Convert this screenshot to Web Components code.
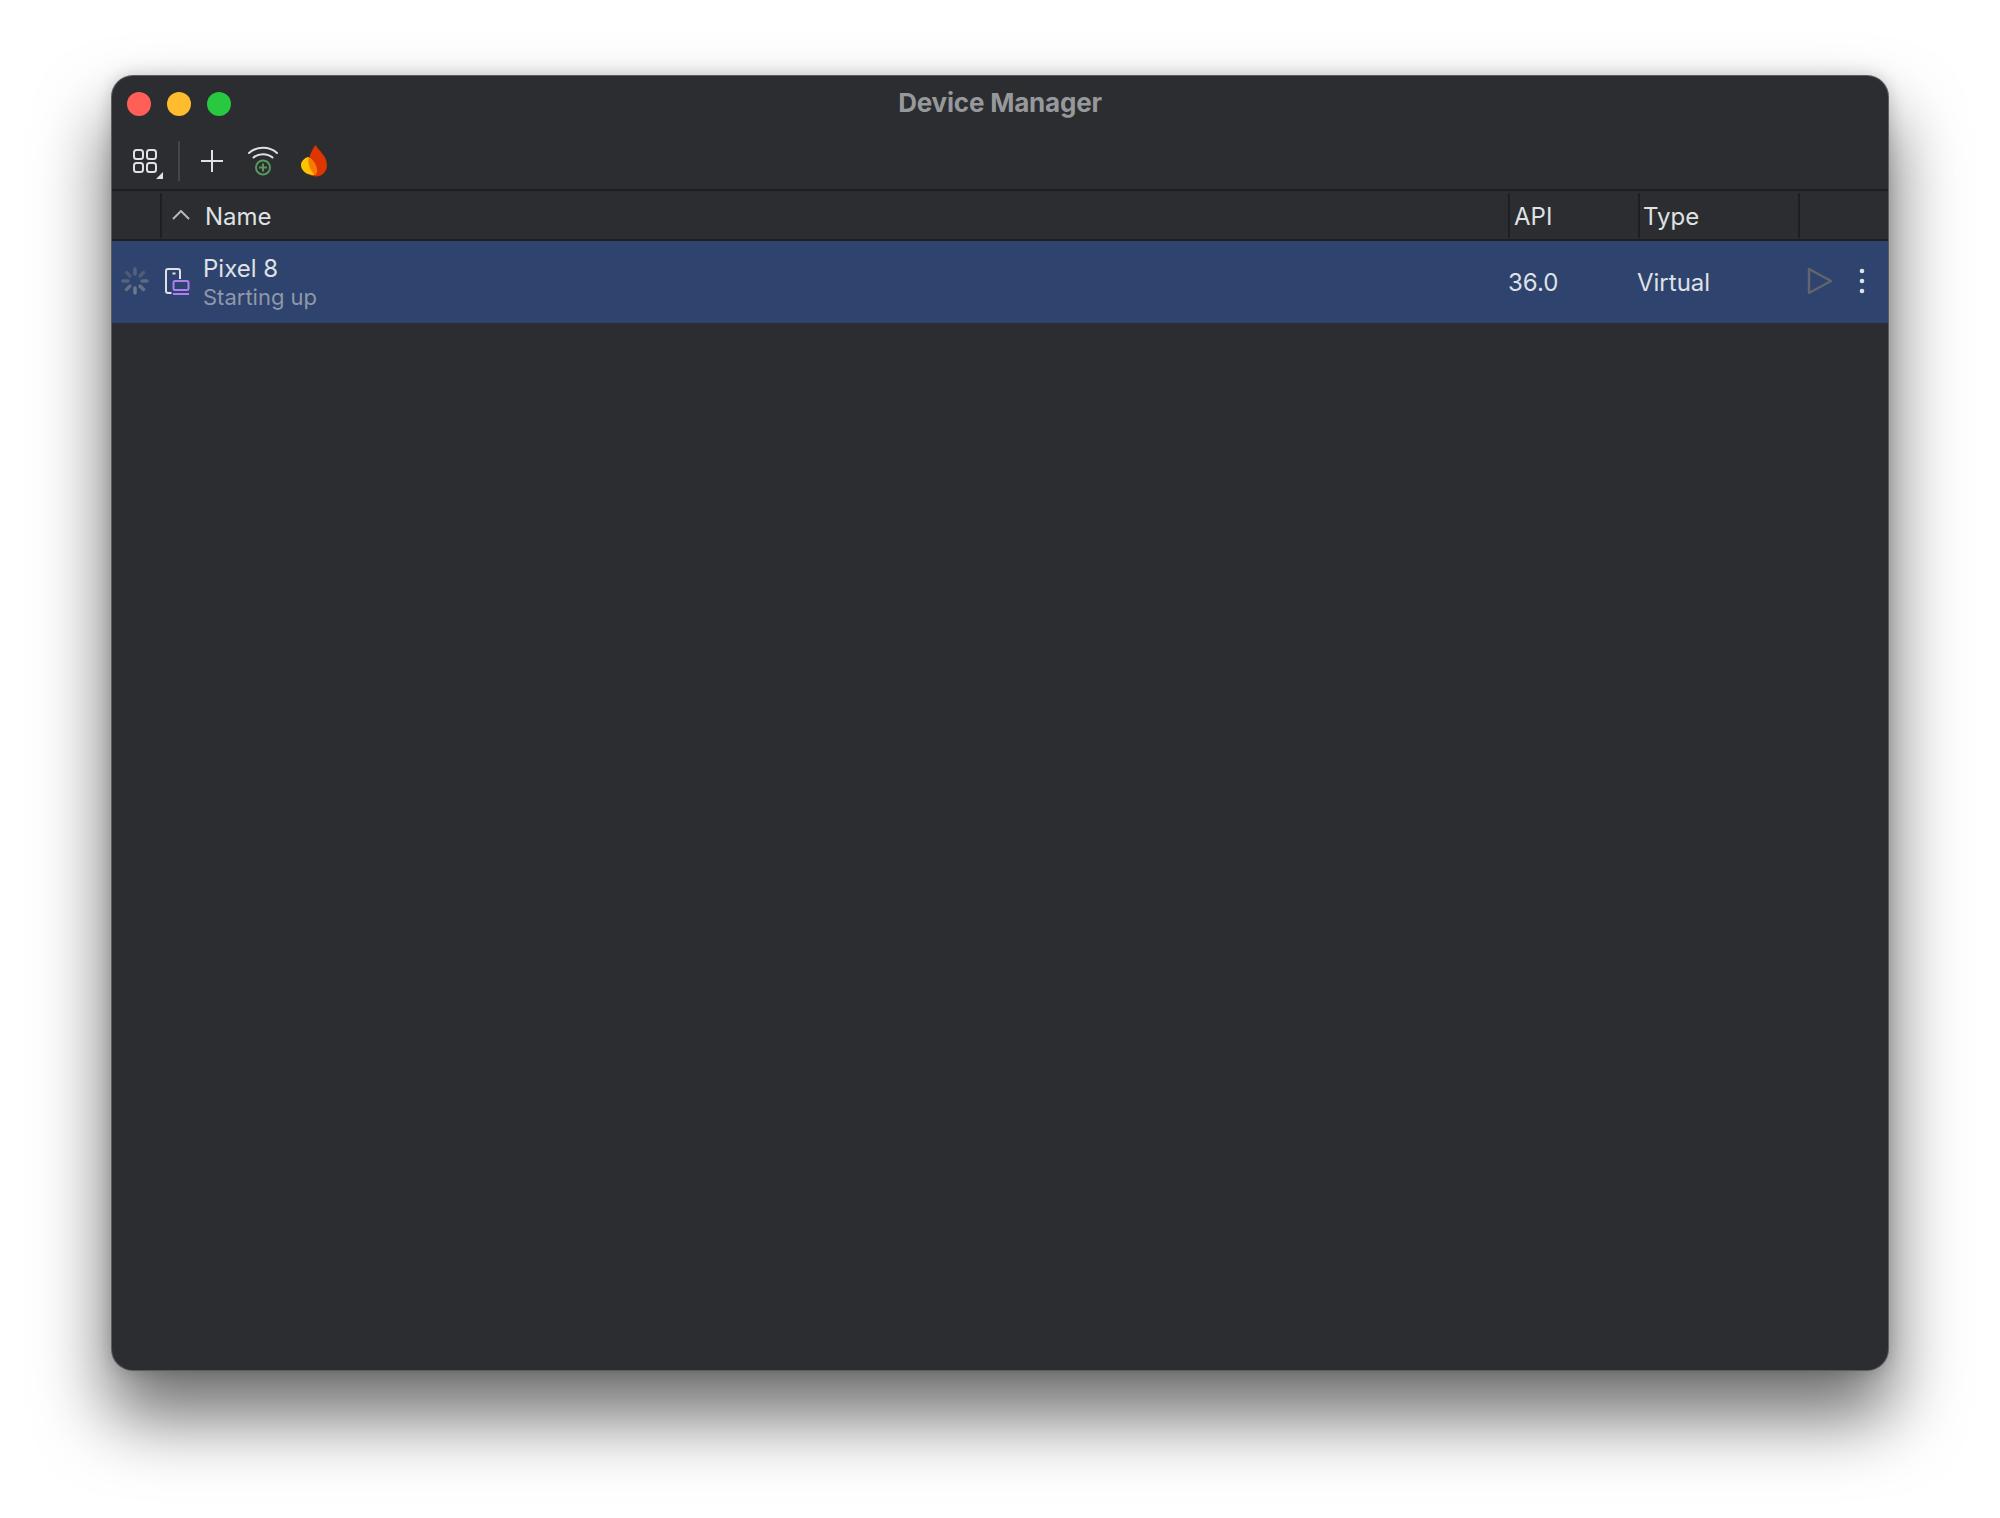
<!DOCTYPE html>
<html>
<head>
<meta charset="utf-8">
<title>Device Manager</title>
<style>
  html, body { margin: 0; height: 100%; background: #fff; }
  body { padding: 76px 112px 0; box-sizing: border-box; height: 1518px; overflow: hidden; font-family: Inter, "Liberation Sans", sans-serif; }
</style>
</head>
<body>
<device-window window-title="Device Manager">
  <window-toolbar></window-toolbar>
  <device-table></device-table>
</device-window>

<script>
class DeviceWindow extends HTMLElement {
  connectedCallback() {
    this.attachShadow({ mode: 'open' });
    this.shadowRoot.innerHTML = `
      <style>
        :host {
          display: flex;
          flex-direction: column;
          width: 1776px;
          height: 1294px;
          box-sizing: border-box;
          background: #2b2d30;
          border-radius: 21px;
          box-shadow: 0 0 0 1px #5c5d60, 0 44px 70px 4px rgba(0,0,0,.56), 0 0 18px rgba(0,0,0,.2);
        }
        .title {
          display: flex;
          align-items: center;
          gap: 16px;
          height: 56px;
          padding: 0 15px;
          position: relative;
          flex: none;
        }
        .dot { width: 24px; height: 24px; border-radius: 50%; }
        .r { background: #ff5f57; }
        .y { background: #febc2e; }
        .g { background: #28c840; }
        .name {
          position: absolute;
          left: 0; right: 0; top: 11px;
          text-align: center;
          font: 700 26px/32px Inter, "Liberation Sans", sans-serif;
          letter-spacing: -0.2px;
          color: #97989b;
        }
      </style>
      <div class="title">
        <span class="dot r"></span><span class="dot y"></span><span class="dot g"></span>
        <span class="name">${this.getAttribute('window-title')}</span>
      </div>
      <slot></slot>
    `;
  }
}

class WindowToolbar extends HTMLElement {
  connectedCallback() {
    this.attachShadow({ mode: 'open' });
    this.shadowRoot.innerHTML = `
      <style>
        :host {
          display: flex;
          align-items: center;
          height: 59px;
          padding: 1px 0 0 21px;
          flex: none;
          box-sizing: border-box;
          border-bottom: 2px solid #1e1f22;
        }
        svg { display: block; flex: none; }
        .apps { margin-top: 6px; }
        .sep { width: 2px; height: 40px; background: #43454a; margin: 0 21px 0 14px; }
        .wifi { margin-left: 25px; }
        .fire { margin-left: 23px; }
      </style>
      <svg class="apps" width="31" height="31" viewBox="0 0 31 31" fill="none" stroke="#dfe1e5" stroke-width="2">
        <rect x="1" y="1" width="9" height="9" rx="2.500"/>
        <rect x="14" y="1" width="9" height="9" rx="2.500"/>
        <rect x="1" y="14" width="9" height="9" rx="2.500"/>
        <rect x="14" y="14" width="9" height="9" rx="2.500"/>
        <path d="M30 23v7h-7z" fill="#dfe1e5" stroke="none"/>
      </svg>
      <div class="sep"></div>
      <svg width="22" height="22" viewBox="0 0 22 22" fill="none" stroke="#dfe1e5" stroke-width="2">
        <path d="M11 0v22M0 11h22"/>
      </svg>
      <svg class="wifi" width="30" height="30" viewBox="0 0 30 30" fill="none">
        <path d="M1 7C8.500 0 21.500 0 29 7" stroke="#dfe1e5" stroke-width="2" stroke-linecap="round"/>
        <path d="M5.500 11.500C10.500 7 19.500 7 24.500 11.500" stroke="#dfe1e5" stroke-width="2" stroke-linecap="round"/>
        <circle cx="15" cy="21.500" r="7" stroke="#57965c" stroke-width="2"/>
        <path d="M15 17.500v8M11 21.500h8" stroke="#57965c" stroke-width="2"/>
      </svg>
      <svg class="fire" width="26" height="32" viewBox="0 0 26 32">
        <path d="M14.500 0C18 6 26 11 26 20C26 27 20.500 31.500 15 31.500C12 31.500 9 30.500 7 28C6 20 8 8 14.500 0Z" fill="#dd3600"/>
        <path d="M7 12C10 13 14.500 18 15.500 24C16 27 15 30 12 30C6 30 0 26 0 20C0 16 3.500 13 7 12Z" fill="#ffc400"/>
        <path d="M7.500 12.500C11 14 15 18.500 16 24C16.500 27 15.500 29 14 30C10 27 6.500 20 7.500 12.500Z" fill="#f57c00"/>
      </svg>
    `;
  }
}

class DeviceTable extends HTMLElement {
  connectedCallback() {
    this.attachShadow({ mode: 'open' });
    this.shadowRoot.innerHTML = `
      <style>
        :host { display: block; --cols: 48px 1348px 130px 160px 90px; }
        .head {
          display: grid;
          grid-template-columns: var(--cols);
          height: 48px;
          align-items: center;
          color: #dfe1e5;
          font-size: 24px;
          border-bottom: 2px solid #1e1f22;
        }
        .cell {
          height: 45px;
          display: flex;
          align-items: center;
          gap: 15px;
          box-sizing: border-box;
          padding-left: 4px;
          padding-top: 3px;
          border-left: 2px solid #1e1f22;
        }
        .cell.first { border-left: 0; }
        .cell.name { padding-left: 10px; }
        .cell.type { padding-left: 3px; }
        .cell.name svg { margin-top: -3px; }
        svg { display: block; flex: none; }
        .row {
          display: grid;
          grid-template-columns: var(--cols);
          align-items: center;
          height: 82px;
          background: #2e436e;
          color: #dfe1e5;
          font-size: 24px;
        }
        .lead { display: flex; align-items: center; padding-left: 9px; margin-top: -2px; }
        .dev { display: flex; align-items: center; gap: 12px; margin-left: 5px; }
        .lines { display: flex; flex-direction: column; padding-top: 2px; }
        .lines b { font-weight: 400; line-height: 28px; }
        .lines i { font-style: normal; font-size: 22px; line-height: 28px; color: #8f98a9; }
        .virtual { margin-left: -1px; }
        .acts { display: flex; align-items: center; gap: 26px; padding-left: 9px; margin-top: -2px; }
      </style>
      <div class="head">
        <div class="cell first"></div>
        <div class="cell name">
          <svg width="18" height="10" viewBox="0 0 18 10" fill="none" stroke="#b4b8bf" stroke-width="2"><path d="M1 9l8-8 8 8"/></svg>
          <span>Name</span>
        </div>
        <div class="cell">API</div>
        <div class="cell type">Type</div>
        <div class="cell"></div>
      </div>
      <div class="row">
        <div class="lead">
          <svg width="28" height="28" viewBox="0 0 28 28" stroke-width="3.500" stroke-linecap="round" fill="none">
            <path d="M14 2v5" stroke="#53627b"/>
            <path d="M22.500 5.500l-3.500 3.500" stroke="#4f5e78"/>
            <path d="M26 14h-5" stroke="#5d6a80"/>
            <path d="M22.500 22.500l-3.500-3.500" stroke="#667184"/>
            <path d="M14 26v-5" stroke="#6f788a"/>
            <path d="M5.500 22.500l3.500-3.500" stroke="#626e83"/>
            <path d="M2 14h5" stroke="#566479"/>
            <path d="M5.500 5.500l3.500 3.500" stroke="#4b5a75"/>
          </svg>
        </div>
        <div class="dev">
          <svg width="26" height="28" viewBox="0 0 26 28" fill="none">
            <path d="M6.500 25H3a2 2 0 0 1-2-2V3a2 2 0 0 1 2-2h10a2 2 0 0 1 2 2v8" stroke="#dfe1e5" stroke-width="2"/>
            <path d="M7.500 5.500h3" stroke="#dfe1e5" stroke-width="2"/>
            <rect x="8.500" y="13" width="15" height="9" rx="1.500" stroke="#b07fef" stroke-width="2"/>
            <path d="M8 26h16" stroke="#b07fef" stroke-width="2"/>
          </svg>
          <div class="lines"><b>Pixel 8</b><i>Starting up</i></div>
        </div>
        <div>36.0</div>
        <div class="virtual">Virtual</div>
        <div class="acts">
          <svg width="26" height="28" viewBox="0 0 26 28" fill="none" stroke="#62656b" stroke-width="2.500" stroke-linejoin="round"><path d="M2 2l22 12L2 26z"/></svg>
          <svg width="6" height="26" viewBox="0 0 6 26" fill="#dfe1e5"><circle cx="3" cy="3" r="2.300"/><circle cx="3" cy="13" r="2.300"/><circle cx="3" cy="23" r="2.300"/></svg>
        </div>
      </div>
    `;
  }
}

customElements.define('device-window', DeviceWindow);
customElements.define('window-toolbar', WindowToolbar);
customElements.define('device-table', DeviceTable);
</script>
</body>
</html>
